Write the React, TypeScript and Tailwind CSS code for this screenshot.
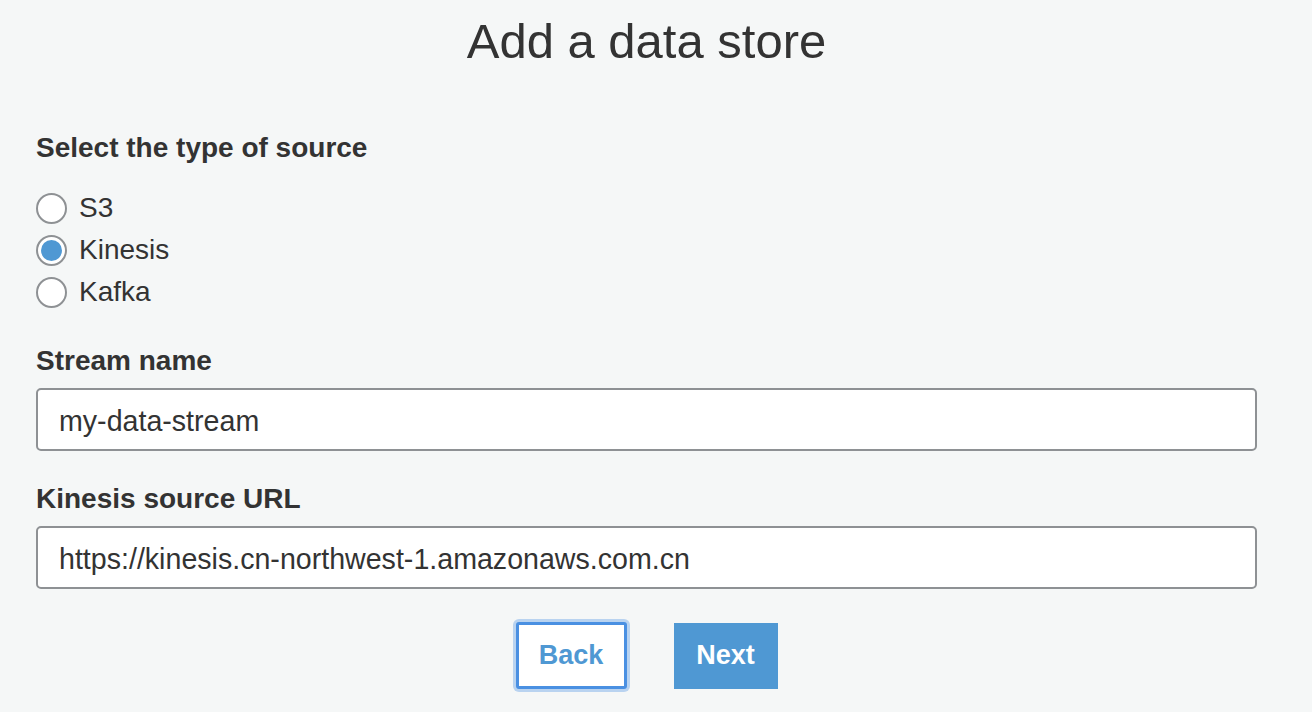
import React from 'react';

const sources = ['S3', 'Kinesis', 'Kafka'];

const Radio: React.FC<{ label: string; checked?: boolean }> = ({ label, checked }) => (
  <label className="flex items-center h-[42px]">
    <span className="w-[31px] h-[31px] rounded-full border-2 border-[#8e9194] bg-white flex items-center justify-center">
      {checked && <span className="w-[21px] h-[21px] rounded-full bg-[#4f98d3]" />}
    </span>
    <span className="ml-[12px] text-[28px] leading-[30px] text-[#333]">{label}</span>
  </label>
);

const Field: React.FC<{ label: string; value: string }> = ({ label, value }) => (
  <div className="mt-[33px]">
    <div className="text-[28px] leading-[30px] font-bold text-[#333]">{label}</div>
    <div className="mt-[12px] h-[63px] bg-white border-2 border-[#8e9194] rounded-[5px] flex items-center px-[21px]">
      <span className="text-[28.6px] leading-[30px] text-[#333] pt-[2px]">{value}</span>
    </div>
  </div>
);

export default function App() {
  return (
    <div
      className="w-[1312px] h-[712px] bg-[#f5f7f7] overflow-hidden"
      style={{ fontFamily: '"Liberation Sans", Arial, sans-serif' }}
    >
      <div className="ml-[36px] w-[1221px]">
        <h1 className="pt-[13px] text-center text-[49px] leading-[56px] text-[#333]">Add a data store</h1>

        <div className="mt-[64px] text-[28px] leading-[30px] font-bold text-[#333]">Select the type of source</div>
        <div className="mt-[24px] flex flex-col">
          {sources.map((s) => (
            <Radio key={s} label={s} checked={s === 'Kinesis'} />
          ))}
        </div>

        <Field label="Stream name" value="my-data-stream" />
        <Field label="Kinesis source URL" value="https://kinesis.cn-northwest-1.amazonaws.com.cn" />

        <div className="mt-[33px] flex justify-center items-center gap-[47px]">
          <button className="w-[111px] h-[67px] bg-white border-[3px] border-[#4a90e2] shadow-[0_0_0_3px_rgba(74,144,226,0.35)] rounded-[3px] text-[27px] font-bold text-[#4f98d3]">
            Back
          </button>
          <button className="w-[104px] h-[66px] bg-[#4f98d3] text-[27px] font-bold text-white">
            Next
          </button>
        </div>
      </div>
    </div>
  );
}
